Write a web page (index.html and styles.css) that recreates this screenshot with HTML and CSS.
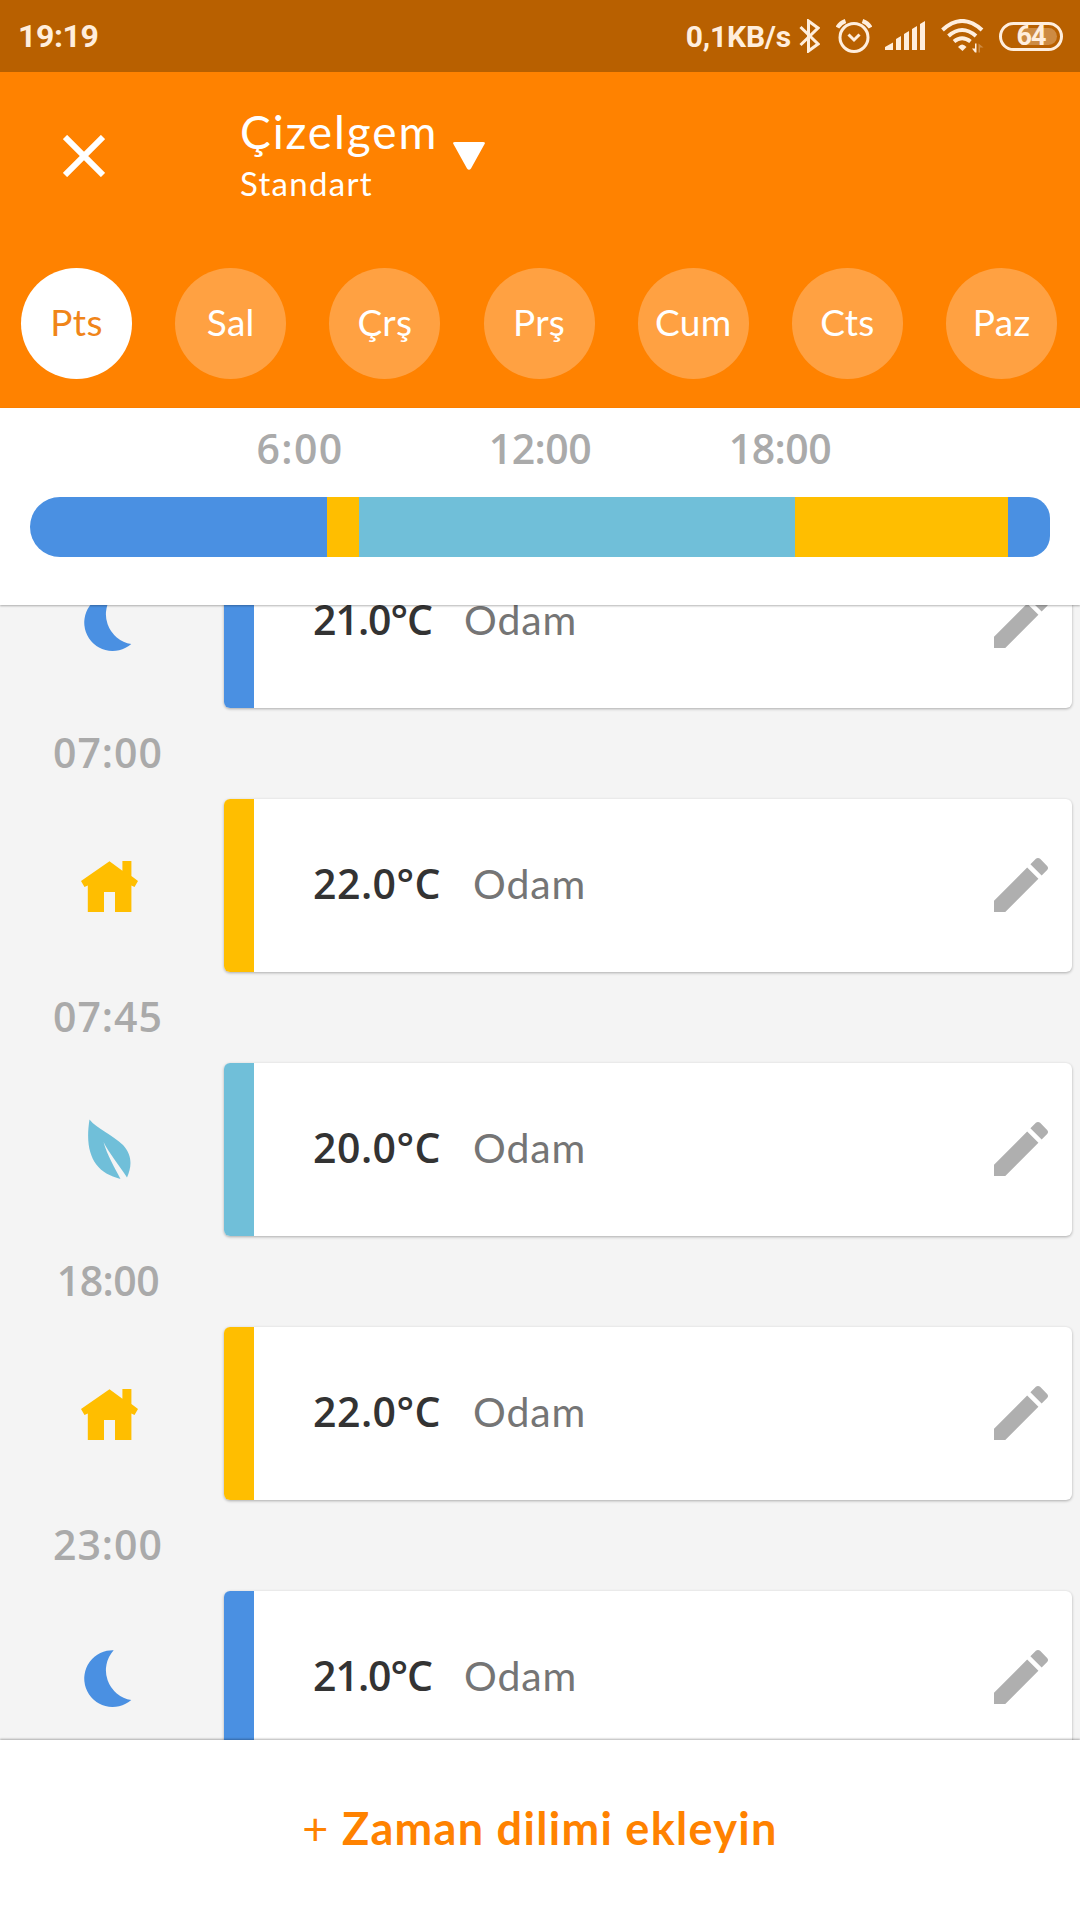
FILE: index.html
```html
<!DOCTYPE html>
<html lang="tr">
<head>
    <meta charset="UTF-8">
    <meta name="viewport" content="width=device-width, initial-scale=1.0">
    <title>Çizelgem</title>
    <link rel="stylesheet" href="styles.css">
</head>
<body>
    <svg class="sprite" aria-hidden="true">
        <symbol id="icon-moon" viewBox="0 0 57 57">
            <path d="M29.7 .2A30 30 0 0 0 47.3 50A28.4 28.4 0 1 1 29.7 .2z"/>
        </symbol>
        <symbol id="icon-home" viewBox="0 0 57 57">
            <path d="M28.5 3.3L41.4 12.8V3H50.4V18L57 23L53.5 29L50.4 27.5V54H34V34H23V54H6.8V27.5L3.5 29L0 23z"/>
        </symbol>
        <symbol id="icon-leaf" viewBox="0 0 44 60">
            <path d="M2.5 .5C10 10 26 16 36 26C46 37 44.5 48 40 58.5C32 46 22 34 16.5 23C20 36 28 49 33.5 60C8 54 -3 35 2.5 .5z"/>
        </symbol>
        <symbol id="icon-edit" viewBox="0 0 24 24">
            <path d="M3 17.25V21h3.75L17.81 9.94l-3.75-3.75L3 17.25zM20.71 7.04c.39-.39.39-1.02 0-1.41l-2.34-2.34c-.39-.39-1.02-.39-1.41 0l-1.83 1.83 3.75 3.75 1.83-1.83z"/>
        </symbol>
    </svg>

    <div class="status-bar">
        <span class="clock">19:19</span>
        <div class="status-icons">
            <span class="net-speed">0,1KB/s</span>
            <svg class="bluetooth" viewBox="0 0 21 34" width="21" height="34">
                <path d="M1.5 8L19 25L9.5 32V2L19 9L1.5 26"/>
            </svg>
            <svg class="alarm" viewBox="0 0 36 34" width="36" height="34">
                <circle cx="18" cy="18.5" r="14"/>
                <path d="M12.5 15.5L18 21L23.5 15.5"/>
                <path class="bells" d="M1.5 8.5Q4 4 9.5 2M34.5 8.5Q32 4 26.5 2"/>
            </svg>
            <svg class="signal" viewBox="0 0 40 30" width="40" height="30">
                <path d="M0 29V26L8 21.5V29zM11 29V18L16 15V29zM19 29V13L24 10V29zM27 29V8L32 5V29zM35 29V3L40 0V29z"/>
            </svg>
            <svg class="wifi" viewBox="0 0 43 34" width="43" height="34">
                <path class="waves" d="M1.5 11Q21 -7 41 11M7.5 17Q21 5 35 17M13 22.5Q21 16 29.5 22.5"/>
                <path class="dot" d="M17 28Q21 23 25.5 28L21.5 32z"/>
                <path class="dot" d="M31 29.5H34V24.5H35.5V33.5H34z"/>
                <path class="dot faint" d="M37.5 24.5L42.5 28.5H39V33.5H37.5z"/>
            </svg>
            <div class="battery"><span class="charge"></span><span class="percent">64</span></div>
        </div>
    </div>

    <header class="header">
        <div class="title-row">
            <button class="close-btn" aria-label="Kapat">
                <svg viewBox="0 0 42 42" width="42" height="42"><path d="M2 2L40 40M40 2L2 40"/></svg>
            </button>
            <div class="titles">
                <h1>Çizelgem</h1>
                <p>Standart</p>
            </div>
            <svg class="arrow-down" viewBox="0 0 32 28" width="32" height="28"><path d="M2 0H30Q33 0 31.3 2.5L18 26.5Q16 29 14 26.5L.7 2.5Q-1 0 2 0z"/></svg>
        </div>
        <nav class="days">
            <button class="day active">Pts</button>
            <button class="day">Sal</button>
            <button class="day">Çrş</button>
            <button class="day">Prş</button>
            <button class="day">Cum</button>
            <button class="day">Cts</button>
            <button class="day">Paz</button>
        </nav>
    </header>

    <section class="timeline">
        <div class="hours">
            <span>6:00</span>
            <span class="narrow">12:00</span>
            <span class="narrow">18:00</span>
        </div>
        <div class="bar">
            <div class="night" style="width: 29.13%"></div>
            <div class="home" style="width: 3.16%"></div>
            <div class="eco" style="width: 42.68%"></div>
            <div class="home" style="width: 20.88%"></div>
            <div class="night" style="width: 4.15%"></div>
        </div>
    </section>

    <main class="schedule">
        <div class="slots">
            <div class="slot">
                <svg class="mode moon"><use href="#icon-moon"/></svg>
                <div class="card">
                    <div class="stripe night"></div>
                    <span class="temp narrow">21.0°C</span>
                    <span class="room">Odam</span>
                    <svg class="edit"><use href="#icon-edit"/></svg>
                </div>
            </div>
            <div class="time">07:00</div>
            <div class="slot">
                <svg class="mode house"><use href="#icon-home"/></svg>
                <div class="card">
                    <div class="stripe home"></div>
                    <span class="temp">22.0°C</span>
                    <span class="room">Odam</span>
                    <svg class="edit"><use href="#icon-edit"/></svg>
                </div>
            </div>
            <div class="time">07:45</div>
            <div class="slot">
                <svg class="mode leaf"><use href="#icon-leaf"/></svg>
                <div class="card">
                    <div class="stripe eco"></div>
                    <span class="temp">20.0°C</span>
                    <span class="room">Odam</span>
                    <svg class="edit"><use href="#icon-edit"/></svg>
                </div>
            </div>
            <div class="time narrow">18:00</div>
            <div class="slot">
                <svg class="mode house"><use href="#icon-home"/></svg>
                <div class="card">
                    <div class="stripe home"></div>
                    <span class="temp">22.0°C</span>
                    <span class="room">Odam</span>
                    <svg class="edit"><use href="#icon-edit"/></svg>
                </div>
            </div>
            <div class="time">23:00</div>
            <div class="slot">
                <svg class="mode moon"><use href="#icon-moon"/></svg>
                <div class="card">
                    <div class="stripe night"></div>
                    <span class="temp narrow">21.0°C</span>
                    <span class="room">Odam</span>
                    <svg class="edit"><use href="#icon-edit"/></svg>
                </div>
            </div>
        </div>
    </main>

    <footer class="footer">
        <button class="add-btn"><span class="plus">+</span> Zaman dilimi ekleyin</button>
    </footer>
</body>
</html>
```
FILE: styles.css
```css
:root {
    --orange: #ff8200;
    --orange-dark: #b86000;
    --orange-light: #ffa142;
    --night: #4a90e2;
    --home: #ffbe00;
    --eco: #70bfd9;
    --status: #ffeedd;
    --gray: #aaaaaa;
}

* {
    margin: 0;
    padding: 0;
    box-sizing: border-box;
}

body {
    width: 1080px;
    height: 1920px;
    overflow: hidden;
    display: flex;
    flex-direction: column;
    font-family: Lato, sans-serif;
    background-color: #f4f4f4;
}

button {
    border: none;
    background: none;
    font-family: inherit;
    cursor: pointer;
}

.sprite {
    display: none;
}

/* status bar */
.status-bar {
    height: 72px;
    flex: none;
    display: flex;
    justify-content: space-between;
    align-items: center;
    padding: 0 17px 0 18px;
    background-color: var(--orange-dark);
    color: var(--status);
    font-family: Roboto, sans-serif;
    font-weight: 700;
}

.clock {
    font-size: 32px;
    line-height: 38px;
    letter-spacing: -0.4px;
}

.status-icons {
    display: flex;
    align-items: center;
}

.status-icons svg {
    fill: none;
    stroke: var(--status);
    stroke-width: 3;
}

.net-speed {
    font-size: 30px;
    letter-spacing: -0.2px;
    margin-right: 8px;
}

.status-icons .alarm {
    margin-left: 16px;
}

.status-icons .alarm .bells {
    stroke-width: 4;
}

.status-icons .signal {
    margin-left: 13px;
    fill: var(--status);
    stroke: none;
}

.status-icons .wifi {
    margin: 0 15px 0 16px;
    stroke-width: 4;
}

.wifi .dot {
    fill: var(--status);
    stroke: none;
}

.wifi .faint {
    opacity: 0.3;
}

.battery {
    position: relative;
    width: 64px;
    height: 29px;
    border: 3px solid var(--status);
    border-radius: 15px;
    display: flex;
    align-items: center;
    justify-content: center;
}

.battery .charge {
    position: absolute;
    right: 3px;
    top: 3px;
    width: 36px;
    height: 17px;
    border-radius: 0 9px 9px 0;
    background-color: rgba(255, 238, 221, 0.3);
}

.battery .percent {
    position: relative;
    font-size: 27px;
    line-height: 27px;
    letter-spacing: -1px;
}

/* header */
.header {
    height: 336px;
    flex: none;
    background-color: var(--orange);
    color: white;
}

.title-row {
    display: flex;
    height: 196px;
    padding-left: 63px;
}

.close-btn {
    width: 42px;
    height: 42px;
    margin-top: 63px;
}

.close-btn svg {
    display: block;
    stroke: white;
    stroke-width: 6;
}

.titles {
    margin: 32px 0 0 135px;
    width: 213px;
    white-space: nowrap;
}

.titles h1 {
    font-size: 46px;
    font-weight: 400;
    line-height: 56px;
    letter-spacing: 1.9px;
}

.titles p {
    font-size: 33px;
    line-height: 40px;
    letter-spacing: 1.3px;
    margin-top: 3px;
}

.arrow-down {
    margin-top: 70px;
    fill: white;
}

.days {
    display: flex;
    gap: 43.2px;
    padding-left: 21px;
}

.day {
    width: 111px;
    height: 111px;
    padding-bottom: 5px;
    border-radius: 50%;
    background-color: var(--orange-light);
    color: white;
    font-size: 37px;
    letter-spacing: 0.3px;
}

.day.active {
    background-color: white;
    color: #f08519;
}

/* timeline */
.night {
    background-color: var(--night);
}

.home {
    background-color: var(--home);
}

.eco {
    background-color: var(--eco);
}

.timeline {
    position: relative;
    height: 197px;
    flex: none;
    padding: 16px 30px 0;
    background-color: white;
    box-shadow: 0 1px 2px rgba(0, 0, 0, 0.3);
}

.hours {
    display: grid;
    grid-template-columns: repeat(3, 240px);
    justify-content: center;
    text-align: center;
    height: 73px;
    color: var(--gray);
    font-family: "Open Sans", sans-serif;
    font-size: 41px;
    font-weight: 600;
    line-height: 48px;
    letter-spacing: 1.4px;
}

.bar {
    display: flex;
    height: 60px;
    border-radius: 30px 21px 21px 30px;
    overflow: hidden;
}

/* slots */
.schedule {
    flex: 1;
    overflow: hidden;
}

.slots {
    margin-top: -70px;
}

.slot {
    display: flex;
    align-items: center;
    height: 173px;
    padding-right: 8px;
}

.mode {
    width: 57px;
    height: 57px;
    margin: 2px 86px 0 81px;
    flex: none;
}

.mode.moon {
    fill: var(--night);
    margin: 2px 83px 0 84px;
}

.mode.house {
    fill: var(--home);
}

.mode.leaf {
    fill: var(--eco);
    width: 44px;
    height: 60px;
    margin: 0 93px 1px 87px;
}

.card {
    flex: 1;
    height: 100%;
    display: flex;
    align-items: center;
    padding-right: 15px;
    background-color: white;
    border-radius: 6px;
    box-shadow: 0 1px 3px rgba(0, 0, 0, 0.3);
}

.stripe {
    width: 30px;
    height: 100%;
    border-radius: 6px 0 0 6px;
}

.temp {
    margin-left: 59px;
    padding-bottom: 5px;
    color: #333;
    font-family: "Open Sans", sans-serif;
    font-size: 41px;
    font-weight: 600;
    letter-spacing: 0.5px;
}

.room {
    margin-left: 32px;
    padding-bottom: 5px;
    color: #757575;
    font-size: 41px;
    letter-spacing: 0.8px;
}

.edit {
    width: 72px;
    height: 72px;
    margin: 0 0 2px auto;
    fill: #afafaf;
}

.time {
    width: 216px;
    height: 91px;
    line-height: 88px;
    text-align: center;
    color: var(--gray);
    font-family: "Open Sans", sans-serif;
    font-size: 41px;
    font-weight: 600;
    letter-spacing: 1px;
}

/* labels that hold a "1" are set tighter */
.narrow {
    letter-spacing: -0.5px;
}

.temp.narrow {
    letter-spacing: -1px;
}

/* footer */
.footer {
    position: relative;
    height: 180px;
    flex: none;
    display: flex;
    justify-content: center;
    align-items: center;
    padding-bottom: 5px;
    background-color: white;
    box-shadow: 0 -1px 2px rgba(0, 0, 0, 0.3);
}

.add-btn {
    color: var(--orange);
    font-size: 45px;
    font-weight: 700;
    letter-spacing: 1.3px;
}

.add-btn .plus {
    font-weight: 400;
}
```
